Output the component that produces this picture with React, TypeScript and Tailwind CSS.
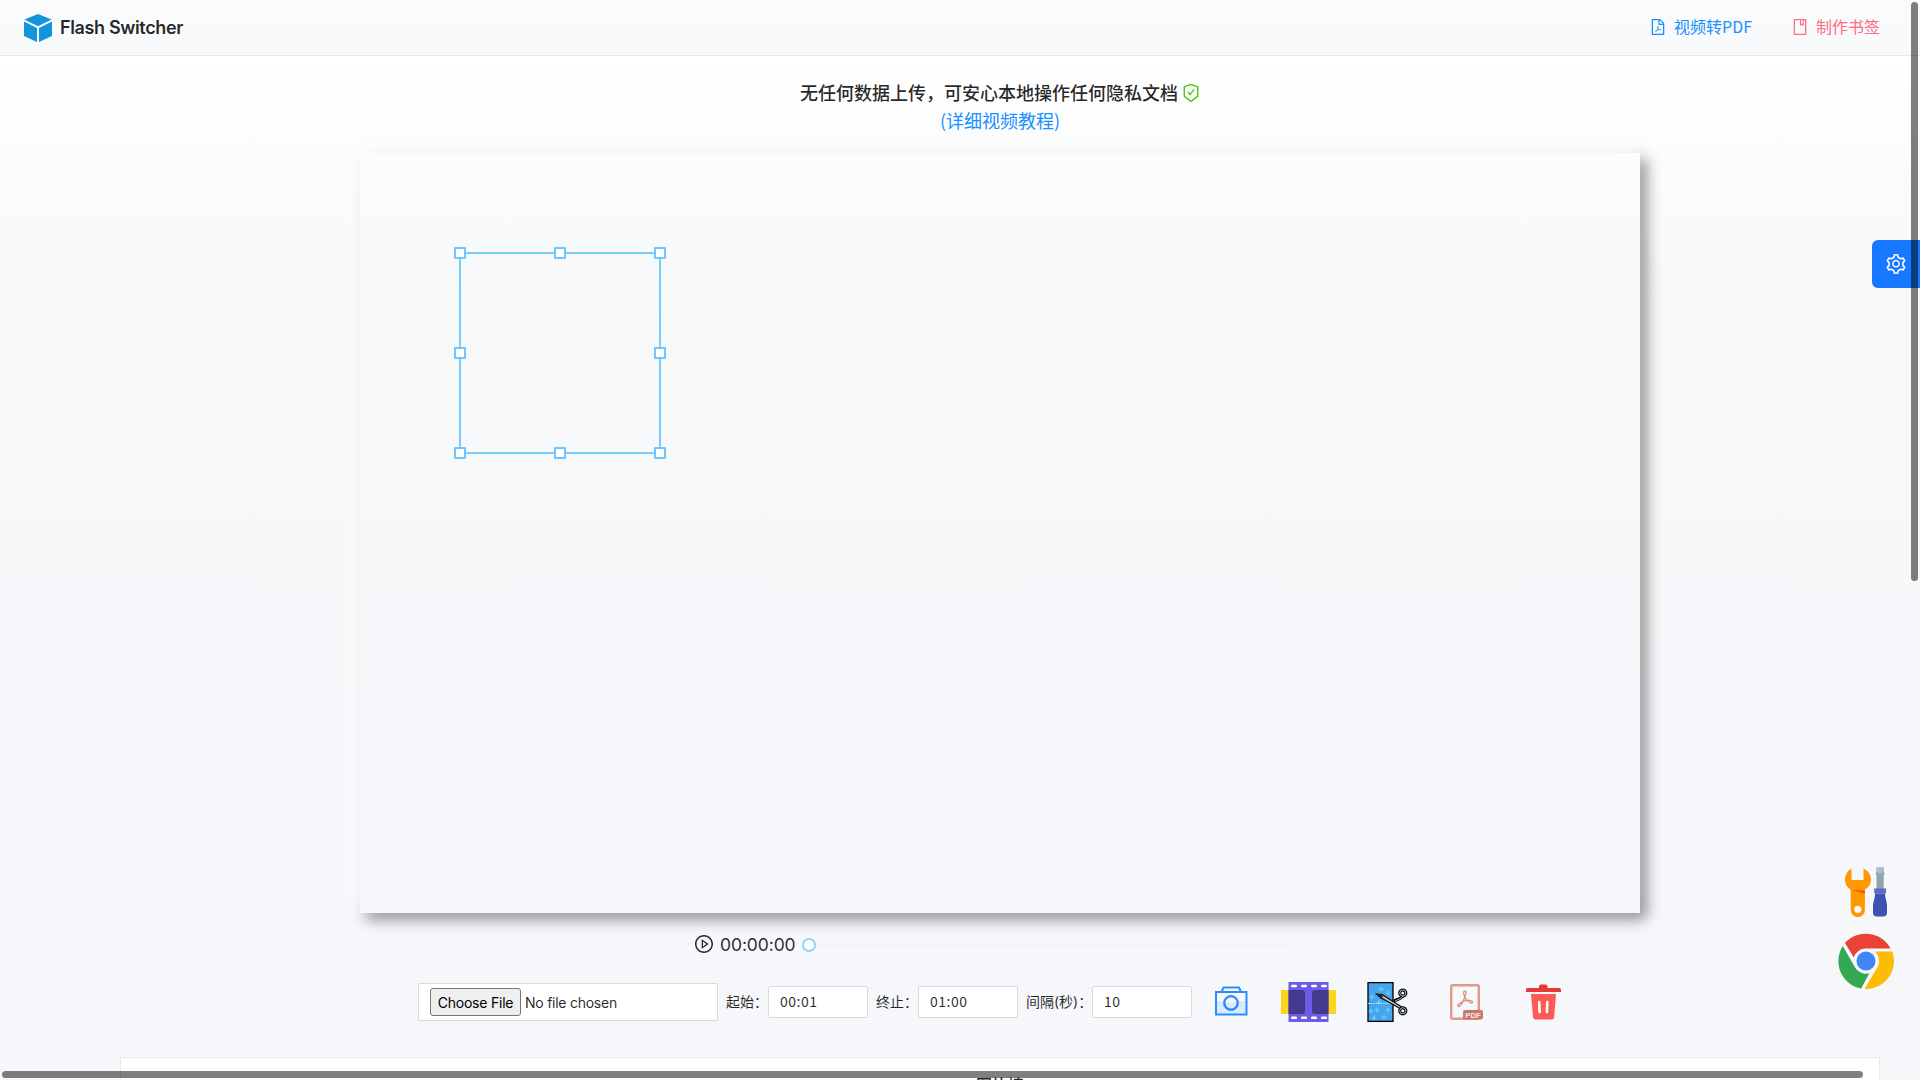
import React from "react";
import {
  AiOutlineFilePdf,
  AiOutlineBook,
  AiOutlineSafetyCertificate,
  AiOutlinePlayCircle,
  AiOutlineSetting,
} from "react-icons/ai";

const TIGHT = "64 64 896 896";

const CubeLogo = () => (
  <svg width="28" height="28" viewBox="0 0 28 28" fill="#1296db">
    <path d="M14 0 27.600 5.400 14 12.200.4 5.400z" />
    <path d="M0 7.600 13 14v14L0 22z" />
    <path d="M28 7.600 15 14v14l13-6z" />
  </svg>
);

const CameraIcon = () => (
  <svg width="34" height="32" viewBox="0 0 34 32" fill="none" stroke="#2b8cff" strokeWidth="2">
    <path d="M2 16h30v13H2z" fill="#dbe9fa" stroke="none" />
    <path d="M2 7h30.500v22.500H2zM7.500 7l2-4.500h15.500l2 4.500" />
    <circle cx="17" cy="18" r="6.700" fill="#dbe9fa" />
    <path d="M10.500 17.500a6.500 6.500 0 0 1 13 0z" fill="#f5f7fa" stroke="none" />
    <circle cx="17" cy="18" r="6.700" />
  </svg>
);

const FilmIcon = () => (
  <svg width="55" height="40" viewBox="0 0 55 40">
    <path d="M0 8h55v24H0z" fill="#fdd61c" />
    <path d="M7.500 0h40v40h-40z" fill="#6c5ce7" />
    <path d="M7.500 8H21a3 3 0 0 1 3 3v18a3 3 0 0 1-3 3H7.500zM47.500 8H34a3 3 0 0 0-3 3v18a3 3 0 0 0 3 3h13.500z" fill="#433a8e" />
    <g fill="#fff">
      {[10, 20, 30, 40].map((x) => (
        <React.Fragment key={x}>
          <rect x={x} y="2.700" width="6" height="2.600" rx="1.200" />
          <rect x={x} y="34.500" width="6" height="2.600" rx="1.200" />
        </React.Fragment>
      ))}
    </g>
  </svg>
);

const CutIcon = () => (
  <svg width="42" height="40" viewBox="0 0 42 40">
    <path d="M1 .7h25v38.600H1z" fill="#4ba3ee" stroke="#000" strokeWidth="1.300" />
    <g fill="#48d5f3">
      {["M14 4", "M21 8", "M5 12", "M12 17", "M20 16", "M4 26", "M10 25", "M17 32", "M21 25", "M7 33"].map((m) => (
        <path key={m} d={m + "l1 2 2 1-2 1-1 2-1-2-2-1 2-1z"} />
      ))}
    </g>
    <path d="M1 21.500h25" stroke="#c5e9ff" strokeDasharray="1.500 1" />
    <g fill="none" stroke="#000" strokeWidth="3">
      <path d="M27 19c4-2 7-2 9-5" />
      <circle cx="35.800" cy="11" r="3.100" />
      <circle cx="35.800" cy="28.800" r="3.100" />
    </g>
    <path d="m9.500 12 5.500.5L34 24.500 33 26.500 13.500 15.500z" fill="#c4c4c4" stroke="#000" strokeWidth="1.100" />
    <path d="m9.500 12 4.500.4 2 2-1 1.600-2-1z" fill="#222" />
    <g fill="none" stroke="#ccc" strokeWidth=".9">
      <circle cx="35.800" cy="11" r="3.100" />
      <circle cx="35.800" cy="28.800" r="3.100" />
      <path d="M28 19c4-2 6-2 8-5" />
    </g>
  </svg>
);

const PdfIcon = () => (
  <svg width="33" height="36" viewBox="0 0 33 36">
    <rect x="1.200" y="1.200" width="27.600" height="33.600" rx="1.500" fill="none" stroke="#df998b" strokeWidth="2.400" />
    <path
      d="M15 7c-2.500 0-1.200 5 1 8 2 3 6.500 5.500 6.500 3.200 0-2.500-6-2.200-9.500-.7-3.200 1.400-6.500 4.200-4.700 5 1.800.7 4.200-3.500 5.700-7.500C15.500 11.500 17 7 15 7z"
      fill="none"
      stroke="#e08574"
      strokeWidth="1.200"
    />
    <rect x="13" y="26" width="20" height="9.500" rx="2" fill="#c9766b" />
    <text x="23" y="33.600" textAnchor="middle" fontFamily="Liberation Sans" fontSize="7.800" fontWeight="bold" fill="#f7e9e7">PDF</text>
  </svg>
);

const TrashIcon = () => (
  <svg width="35" height="36" viewBox="0 0 35 36">
    <path d="M1.500 4H13V2.500Q13 .5 15 .5h4.500q2 0 2 2V4H33q2 0 2 2v2H0V6q0-2 1.500-2z" fill="#e53935" />
    <path d="M5 10h25l-1.800 23q-.2 2.500-2.500 2.500H9.500Q7.200 35.500 7 33z" fill="#ff5a55" />
    <path d="m13.200 18 .4 10M21.300 18l-.4 10" stroke="#fff" strokeWidth="2.600" strokeLinecap="round" />
  </svg>
);

const ToolsIcon = () => (
  <svg width="42" height="50" viewBox="0 0 42 50">
    <path
      fillRule="evenodd"
      d="M6.500 1.500A13 13 0 0 0 0 12.500C0 17 2.300 20.500 5.700 22.500V43a7.100 7.100 0 0 0 14.200 0V22.500c3.600-2 6.100-5.500 6.100-10a13 13 0 0 0-7.500-11V13h-12zM12.800 38.700a3.600 3.600 0 1 1 0 7.200 3.600 3.600 0 0 1 0-7.200z"
      fill="#ff9800"
    />
    <path d="M7.500 23.200h12.400V27z" fill="#e65100" opacity=".75" />
    <path d="M31.500 6.500h7.200V22h-7.200z" fill="#90a4ae" />
    <path d="M31.500 0h7.200v4.500l1 3h-9.200l1-3z" fill="#90a4ae" />
    <path d="M31.500 0h7.200l-.7 5-2.900 2.500L32.200 5z" fill="#b0bec5" />
    <path d="M29.200 21.500h11.800v5H29.200z" fill="#5c6bc0" />
    <path d="M30.200 26.500h9.800c.2 5 2 8 2 12v7q0 4-4 4h-6q-4 0-4-4v-7c0-4 2-7 2.200-12z" fill="#3f51b5" />
  </svg>
);

const ChromeIcon = () => (
  <svg width="56" height="56" viewBox="0 0 56 56">
    <path d="M7 10A28 28 0 0 1 52.500 15.500H28A12.500 12.500 0 0 0 15.800 24.500z" fill="#ea4335" />
    <path d="M4.800 13 16.500 33.500A12.800 12.800 0 0 0 31.300 40.300L23.200 55.600A28 28 0 0 1 4.800 13z" fill="#34a853" />
    <path d="M54.300 18.500H37A12.800 12.800 0 0 1 39 35L26.500 56A28 28 0 0 0 54.300 18.500z" fill="#fbbc05" />
    <circle cx="28" cy="28" r="9.500" fill="#4285f4" />
  </svg>
);

const handles = [
  "-left-[6px] -top-[6px]",
  "left-[94px] -top-[6px]",
  "left-[194px] -top-[6px]",
  "-left-[6px] top-[94px]",
  "left-[194px] top-[94px]",
  "-left-[6px] top-[194px]",
  "left-[94px] top-[194px]",
  "left-[194px] top-[194px]",
];

const Field = ({ label, value, labelClass }: { label: string; value: string; labelClass: string }) => (
  <>
    <span className={"shrink-0 whitespace-nowrap pb-px text-[14px] " + labelClass}>{label}</span>
    <div className="flex h-8 w-[100px] shrink-0 items-center rounded-[2px] border border-[#d9d9d9] bg-white pb-[2px] pl-[11px] font-['Noto_Sans_CJK_SC'] text-[14px] tracking-[0.5px]">
      {value}
    </div>
  </>
);

export default function App() {
  return (
    <div className="relative flex h-[1080px] w-[1920px] flex-col overflow-hidden bg-[#f5f7fa] font-[Inter,'Noto_Sans_CJK_SC',sans-serif] text-[rgba(0,0,0,0.85)]">
      <header className="flex h-14 shrink-0 items-center justify-between border-b border-[#e6e7e8] bg-gradient-to-b from-[#fafbfd] to-[#f7f9fb] pr-10 pl-6">
        <div className="flex items-center gap-2">
          <CubeLogo />
          <span className="text-[18px] leading-7 font-semibold tracking-[-0.36px]">Flash Switcher</span>
        </div>
        <nav className="flex items-center gap-10 font-['Noto_Sans_CJK_SC'] text-[16px] leading-6">
          <a className="flex items-center gap-2 text-[#1890ff]">
            <AiOutlineFilePdf size={16} viewBox={TIGHT} className="-mt-[2px]" />
            <span className="-mt-[3px]">视频转PDF</span>
          </a>
          <a className="flex items-center gap-2 text-[#ff6b81]">
            <AiOutlineBook size={16} viewBox={TIGHT} className="-mt-[2px]" />
            <span className="-mt-[3px]">制作书签</span>
          </a>
        </nav>
      </header>

      <main className="flex w-[2000px] grow flex-col items-center bg-gradient-to-b from-white via-[#f6f8fa] via-[22%] to-[#f5f7fa]">
        <div className="mt-[22px] flex h-[75px] flex-col items-center font-['Noto_Sans_CJK_SC'] text-[18px] leading-[28px]">
          <div className="flex items-center gap-1 font-medium">
            无任何数据上传，可安心本地操作任何隐私文档
            <AiOutlineSafetyCertificate size={18} color="#52c41a" viewBox={TIGHT} className="mt-[2px]" />
          </div>
          <a className="text-[#1890ff]">(详细视频教程)</a>
        </div>

        <div className="relative h-[760px] w-[1280px] shrink-0 shadow-[-6px_-6px_14px_rgba(255,255,255,0.8),6px_6px_14px_rgba(0,0,0,0.46)]">
          <div className="absolute top-[99px] left-[99px] h-[202px] w-[202px] border-2 border-[#7accff]">
            <div className="absolute -top-px -left-px">
              {handles.map((pos) => (
                <i key={pos} className={"absolute size-3 rounded-[1px] border-2 border-[#6fc6ff] bg-white " + pos} />
              ))}
            </div>
          </div>
        </div>

        <div className="mt-[18px] flex h-7 w-[610px] items-center">
          <AiOutlinePlayCircle size={18} viewBox={TIGHT} className="-mt-[2px]" />
          <span className="ml-[7px] w-[75px] text-[17.500px] tracking-[-0.1px]">00:00:00</span>
          <div className="ml-[7px] size-[14px] rounded-full border-2 border-[#91d5ff] bg-white" />
          <div className="mr-[14px] h-1 grow rounded-[2px] bg-[#f4f4f4]" />
        </div>

        <div className="mt-[23px] flex h-10 w-[1164px] shrink-0 items-center">
          <div className="flex h-[38px] w-[300px] shrink-0 items-center rounded-[2px] border border-[#d9d9d9] bg-white pl-[11px] text-[14px]">
            <button className="h-7 w-[91px] rounded-[3px] border border-[#767676] bg-[#efefef] text-[14px] tracking-[-0.22px] text-black">Choose File</button>
            <span className="ml-1 tracking-[-0.25px]">No file chosen</span>
          </div>
          <Field label="起始：" value="00:01" labelClass="ml-2 w-[42px]" />
          <Field label="终止：" value="01:00" labelClass="ml-2 w-[42px]" />
          <Field label="间隔(秒)：" value="10" labelClass="ml-2 w-[66px]" />
          <div className="ml-[22px] flex items-center">
            <div className="-mt-[2px]"><CameraIcon /></div>
            <div className="ml-[33px]"><FilmIcon /></div>
            <div className="ml-[31px]"><CutIcon /></div>
            <div className="ml-[41px]"><PdfIcon /></div>
            <div className="ml-[43px]"><TrashIcon /></div>
          </div>
        </div>

        <section className="mt-[35px] flex h-14 w-[1760px] shrink-0 justify-center border border-[#ececec] bg-white pt-[15px] text-[16px] leading-6 font-medium">
          图片墙
        </section>
      </main>

      <aside className="absolute top-[867px] right-[26px] flex w-14 flex-col items-center gap-4">
        <ToolsIcon />
        <ChromeIcon />
      </aside>
      <button className="absolute top-60 right-0 flex h-12 w-12 items-center justify-center rounded-l-[6px] bg-[#1677ff] text-white">
        <AiOutlineSetting size={20} viewBox={TIGHT} />
      </button>
      <div className="absolute top-[2px] right-[2px] h-[579px] w-[7px] rounded-full bg-black/50" />
      <div className="absolute bottom-[2px] left-[2px] h-[7px] w-[1861px] rounded-full bg-black/50" />
    </div>
  );
}
